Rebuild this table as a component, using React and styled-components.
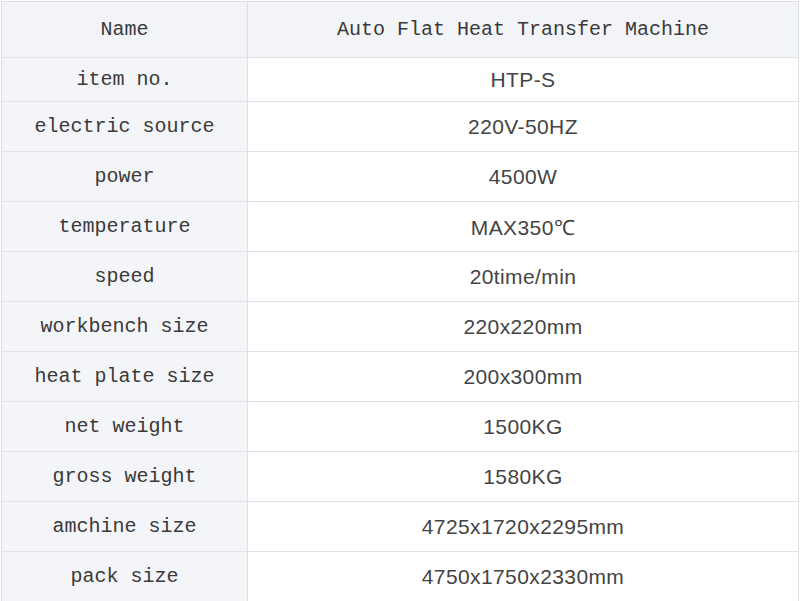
import styled, { createGlobalStyle } from 'styled-components';

const Global = createGlobalStyle`
  html, body {
    margin: 0;
    padding: 0;
    background: #ffffff;
  }
`;

const Sheet = styled.div`
  display: grid;
  grid-template-columns: 246px 1fr;
  width: 797px;
  margin: 1px 0 0 1px;
  border-top: 1px solid #dcdfe4;
  border-left: 1px solid #dcdfe4;
`;

const Cell = styled.div`
  display: flex;
  align-items: center;
  justify-content: center;
  height: ${(p) => p.$h}px;
  box-sizing: border-box;
  border-right: 1px solid #dcdfe4;
  border-bottom: 1px solid #e0e2e6;
  background: ${(p) => (p.$head ? '#f2f4f7' : p.$label ? '#f4f5f9' : '#ffffff')};
  color: #3a3a3a;
`;

const Label = styled.span`
  font-family: 'Liberation Mono', 'DejaVu Sans Mono', monospace;
  font-size: 20px;
  white-space: pre;
`;

const Value = styled.span`
  font-family: 'Liberation Sans', Arial, sans-serif;
  font-size: 21px;
  letter-spacing: 0.4px;
  color: #444;
`;

const rows = [
  ['item no.', 'HTP-S'],
  ['electric source', '220V-50HZ'],
  ['power', '4500W'],
  ['temperature', 'MAX350℃'],
  ['speed', '20time/min'],
  ['workbench size', '220x220mm'],
  ['heat plate size', '200x300mm'],
  ['net weight', '1500KG'],
  ['gross weight', '1580KG'],
  ['amchine size', '4725x1720x2295mm'],
  ['pack size', '4750x1750x2330mm'],
];

export default function App() {
  return (
    <>
      <Global />
      <Sheet>
        <Cell $head $h={56}>
          <Label>Name</Label>
        </Cell>
        <Cell $head $h={56}>
          <Label>Auto Flat Heat Transfer Machine</Label>
        </Cell>
        {rows.map(([k, v], i) => (
          <>
            <Cell key={k} $label $h={i === 0 ? 44 : 50}>
              <Label>{k}</Label>
            </Cell>
            <Cell key={k + '-v'} $h={i === 0 ? 44 : 50}>
              <Value>{v}</Value>
            </Cell>
          </>
        ))}
      </Sheet>
    </>
  );
}
